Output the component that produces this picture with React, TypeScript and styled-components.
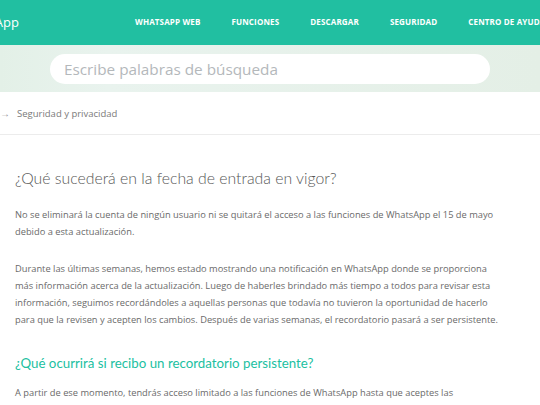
import React from "react";
import styled, { createGlobalStyle } from "styled-components";

const GlobalStyle = createGlobalStyle`
  html, body {
    margin: 0;
    padding: 0;
    background: #fff;
    font-family: "Open Sans", "Noto Sans", sans-serif;
  }
  * {
    box-sizing: border-box;
  }
`;

const navItems = [
  "WhatsApp Web",
  "Funciones",
  "Descargar",
  "Seguridad",
  "Centro de ayuda",
];

const App = () => {
  return (
    <Page>
      <GlobalStyle />
      <Header>
        <LogoClip>
          <Logo>WhatsApp</Logo>
        </LogoClip>
        <Nav>
          {navItems.map((item) => (
            <NavItem key={item}>{item}</NavItem>
          ))}
        </Nav>
      </Header>

      <SearchBand>
        <SearchInput placeholder="Escribe palabras de búsqueda" />
      </SearchBand>

      <Breadcrumb>
        <Arrow>→</Arrow>
        <span>Seguridad y privacidad</span>
      </Breadcrumb>

      <Content>
        <Title>¿Qué sucederá en la fecha de entrada en vigor?</Title>
        <Paragraph>
          No se eliminará la cuenta de ningún usuario ni se quitará el acceso a
          las funciones de WhatsApp el 15 de mayo
          <br />
          debido a esta actualización.
        </Paragraph>
        <Paragraph>
          Durante las últimas semanas, hemos estado mostrando una notificación
          en WhatsApp donde se proporciona
          <br />
          más información acerca de la actualización. Luego de haberles
          brindado más tiempo a todos para revisar esta
          <br />
          información, seguimos recordándoles a aquellas personas que todavía
          no tuvieron la oportunidad de hacerlo
          <br />
          para que la revisen y acepten los cambios. Después de varias semanas,
          el recordatorio pasará a ser persistente.
        </Paragraph>
        <SubTitle>¿Qué ocurrirá si recibo un recordatorio persistente?</SubTitle>
        <Paragraph>
          A partir de ese momento, tendrás acceso limitado a las funciones de
          WhatsApp hasta que aceptes las
          <br />
          actualizaciones. Esto no ocurrirá de inmediato para todos los
          usuarios al mismo tiempo.
        </Paragraph>
      </Content>
    </Page>
  );
};

export default App;

const Page = styled.div`
  width: 540px;
  height: 405px;
  overflow: hidden;
`;

const Header = styled.header`
  display: flex;
  align-items: center;
  height: 45px;
  background: #21bfa1;
  color: #fff;
  white-space: nowrap;
  padding-bottom: 2px;
`;

const LogoClip = styled.div`
  display: flex;
  justify-content: flex-end;
  width: 19px;
  overflow: hidden;
  flex-shrink: 0;
`;

const Logo = styled.div`
  flex-shrink: 0;
  font-size: 13px;
  font-weight: 400;
`;

const Nav = styled.nav`
  display: flex;
  gap: 31px;
  margin-left: 116px;
`;

const NavItem = styled.a`
  font-size: 8px;
  font-weight: 700;
  text-transform: uppercase;
  letter-spacing: 0.15px;
  color: #fff;
`;

const SearchBand = styled.div`
  display: flex;
  align-items: center;
  height: 47px;
  padding-left: 50px;
  background: linear-gradient(90deg, #e3f0e7 0%, #e9f3ee 20%, #e4efe6 100%);
`;

const SearchInput = styled.input`
  width: 440px;
  height: 30px;
  border: none;
  border-radius: 15px;
  background: #fff;
  padding: 0 14px;
  font-family: "Open Sans", sans-serif;
  font-size: 15.3px;
  outline: none;

  &::placeholder {
    color: #b4b8bb;
  }
`;

const Breadcrumb = styled.div`
  display: flex;
  align-items: center;
  gap: 7px;
  height: 43px;
  border-bottom: 1px solid #ececec;
  font-size: 9.5px;
  color: #7a7a7a;
`;

const Arrow = styled.span`
  font-size: 10px;
  color: #999;
`;

const Content = styled.main`
  padding: 30px 0 0 15px;
`;

const Title = styled.h1`
  margin: 0 0 15px;
  font-family: "Lato", "Open Sans", sans-serif;
  font-size: 15.8px;
  line-height: 26px;
  font-weight: 300;
  color: #575757;
`;

const Paragraph = styled.p`
  margin: 0 0 20px;
  font-size: 9.3px;
  line-height: 17px;
  color: #6a6a6a;
  white-space: nowrap;
`;

const SubTitle = styled.h2`
  margin: 24px 0 10px;
  font-family: "Lato", "Open Sans", sans-serif;
  font-size: 13.3px;
  line-height: 22px;
  font-weight: 400;
  color: #21bfa1;
`;
